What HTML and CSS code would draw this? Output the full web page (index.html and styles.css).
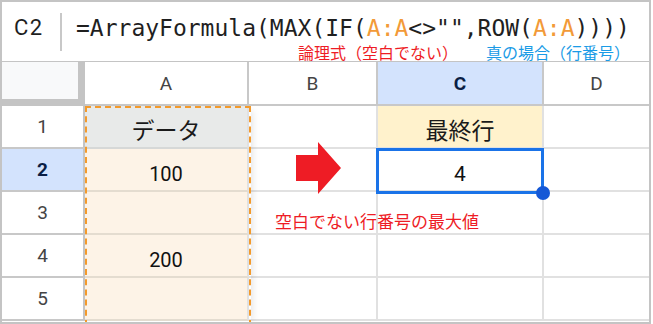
FILE: index.html
```html
<!DOCTYPE html>
<html lang="ja">
<head>
    <meta charset="UTF-8">
    <meta name="viewport" content="width=device-width, initial-scale=1.0">
    <title>ArrayFormula MAX IF ROW</title>
<link rel="stylesheet" href="styles.css">
</head>
<body>
<div class="frame">
    <div class="formula-bar">
        <div class="name-box">C2</div>
        <div class="divider"></div>
        <div class="formula">=ArrayFormula(MAX(IF(<span class="ref">A:A</span>&lt;&gt;"",ROW(<span class="ref">A:A</span>))))</div>
        <div class="note note-red">論理式（空白でない）</div>
        <div class="note note-blue">真の場合（行番号）</div>
    </div>
    <div class="sheet">
        <div class="cell corner"></div>
        <div class="cell col-head">A</div>
        <div class="cell col-head">B</div>
        <div class="cell col-head active">C</div>
        <div class="cell col-head last">D</div>

        <div class="cell row-head">1</div>
        <div class="cell data title">データ</div>
        <div class="cell"></div>
        <div class="cell result-title">最終行</div>
        <div class="cell last"></div>

        <div class="cell row-head active">2</div>
        <div class="cell data">100</div>
        <div class="cell"></div>
        <div class="cell num">4</div>
        <div class="cell last"></div>

        <div class="cell row-head">3</div>
        <div class="cell data"></div>
        <div class="cell"></div>
        <div class="cell"></div>
        <div class="cell last"></div>

        <div class="cell row-head">4</div>
        <div class="cell data">200</div>
        <div class="cell"></div>
        <div class="cell"></div>
        <div class="cell last"></div>

        <div class="cell row-head">5</div>
        <div class="cell data"></div>
        <div class="cell"></div>
        <div class="cell"></div>
        <div class="cell last"></div>

        <!-- overlays -->
        <div class="range-dash"></div>
        <div class="selection"><span class="handle"></span></div>
        <svg class="arrow" width="46" height="54" viewBox="0 0 46 54">
            <polygon points="0,13 22,13 22,0 45,26 22,52 22,39 0,39" fill="#ee1c25"/>
        </svg>
        <div class="note note-bottom">空白でない行番号の最大値</div>
    </div>
</div>
</body>
</html>
```

FILE: styles.css
```css
body {
    margin: 0;
    background-color: #fff;
    font-family: Roboto, Arial, "Noto Sans CJK JP", sans-serif;
}
.frame {
    width: 651px;
    height: 324px;
    box-sizing: border-box;
    border: 2px solid #c4c4c4;
    overflow: hidden;
}
.formula-bar {
    position: relative;
    height: 60px;
    box-sizing: border-box;
    border-bottom: 1px solid #c4c4c4;
    display: flex;
    align-items: center;
    padding-bottom: 8px;
}
.name-box {
    width: 46px;
    padding-left: 12px;
    font-size: 22px;
    letter-spacing: 1.5px;
    color: #1f1f1f;
}
.divider {
    width: 2px;
    height: 38px;
    margin-top: 8px;
    background-color: #c8c8c8;
}
.formula {
    margin-left: 14px;
    font-family: "DejaVu Sans Mono", "Liberation Mono", monospace;
    font-size: 23px;
    color: #1f1f1f;
    white-space: nowrap;
}
.ref {
    color: #f29a38;
}
.note {
    position: absolute;
    font-family: "Noto Sans CJK JP", sans-serif;
    white-space: nowrap;
}
.note-red {
    left: 296px;
    top: 38px;
    font-size: 16px;
    color: #ee1c25;
}
.note-blue {
    left: 484px;
    top: 38px;
    font-size: 16px;
    color: #1a9be6;
}
.sheet {
    position: relative;
    display: grid;
    grid-template-columns: 83px 164px 129px 166px 105px;
    grid-template-rows: 44px repeat(5, 43px);
}
.cell {
    box-sizing: border-box;
    border-right: 2px solid #e1e1e1;
    border-bottom: 2px solid #e1e1e1;
    display: flex;
    align-items: center;
    justify-content: center;
    padding-top: 8px;
    font-size: 20px;
    color: #111;
}
.cell.last {
    border-right: none;
}
.corner {
    background-color: #f8f9fa;
    border-right: 7px solid #c4c4c4;
    border-bottom: 7px solid #c4c4c4;
}
.col-head {
    padding-top: 0;
    font-size: 19px;
    color: #444;
    border-right-color: #c8c8c8;
    border-bottom-color: #c8c8c8;
}
.row-head {
    padding-top: 0;
    font-size: 19px;
    color: #444;
    border-right-color: #c4c4c4;
    border-bottom-color: #c8c8c8;
}
.col-head.active,
.row-head.active {
    background-color: #d3e3fd;
    color: #0b1f45;
    font-weight: bold;
}
.data {
    background-color: #fdf3e7;
    border-bottom-color: #e4dcd0;
}
.data.title {
    background-color: #e8eae9;
    border-bottom-color: #d6d8d7;
}
.title,
.result-title {
    padding-top: 4px;
    font-family: "Noto Sans CJK JP", sans-serif;
    font-size: 23px;
    color: #1a1a1a;
}
.result-title {
    background-color: #fff2cc;
}
.num {
    font-size: 21px;
}
.range-dash {
    position: absolute;
    left: 83px;
    top: 44px;
    width: 166px;
    height: 220px;
    box-sizing: border-box;
    border: 2px dashed #f39a2c;
    box-shadow: 6px 0 8px -5px rgba(0, 0, 0, 0.12);
}
.selection {
    position: absolute;
    left: 374px;
    top: 86px;
    width: 168px;
    height: 46px;
    box-sizing: border-box;
    border: 3px solid #1a73e8;
}
.handle {
    position: absolute;
    right: -9px;
    bottom: -9px;
    width: 14px;
    height: 14px;
    border-radius: 50%;
    background-color: #1558d6;
}
.arrow {
    position: absolute;
    left: 294px;
    top: 80px;
}
.note-bottom {
    left: 273px;
    top: 146px;
    font-size: 17px;
    color: #ee1c25;
}
```
